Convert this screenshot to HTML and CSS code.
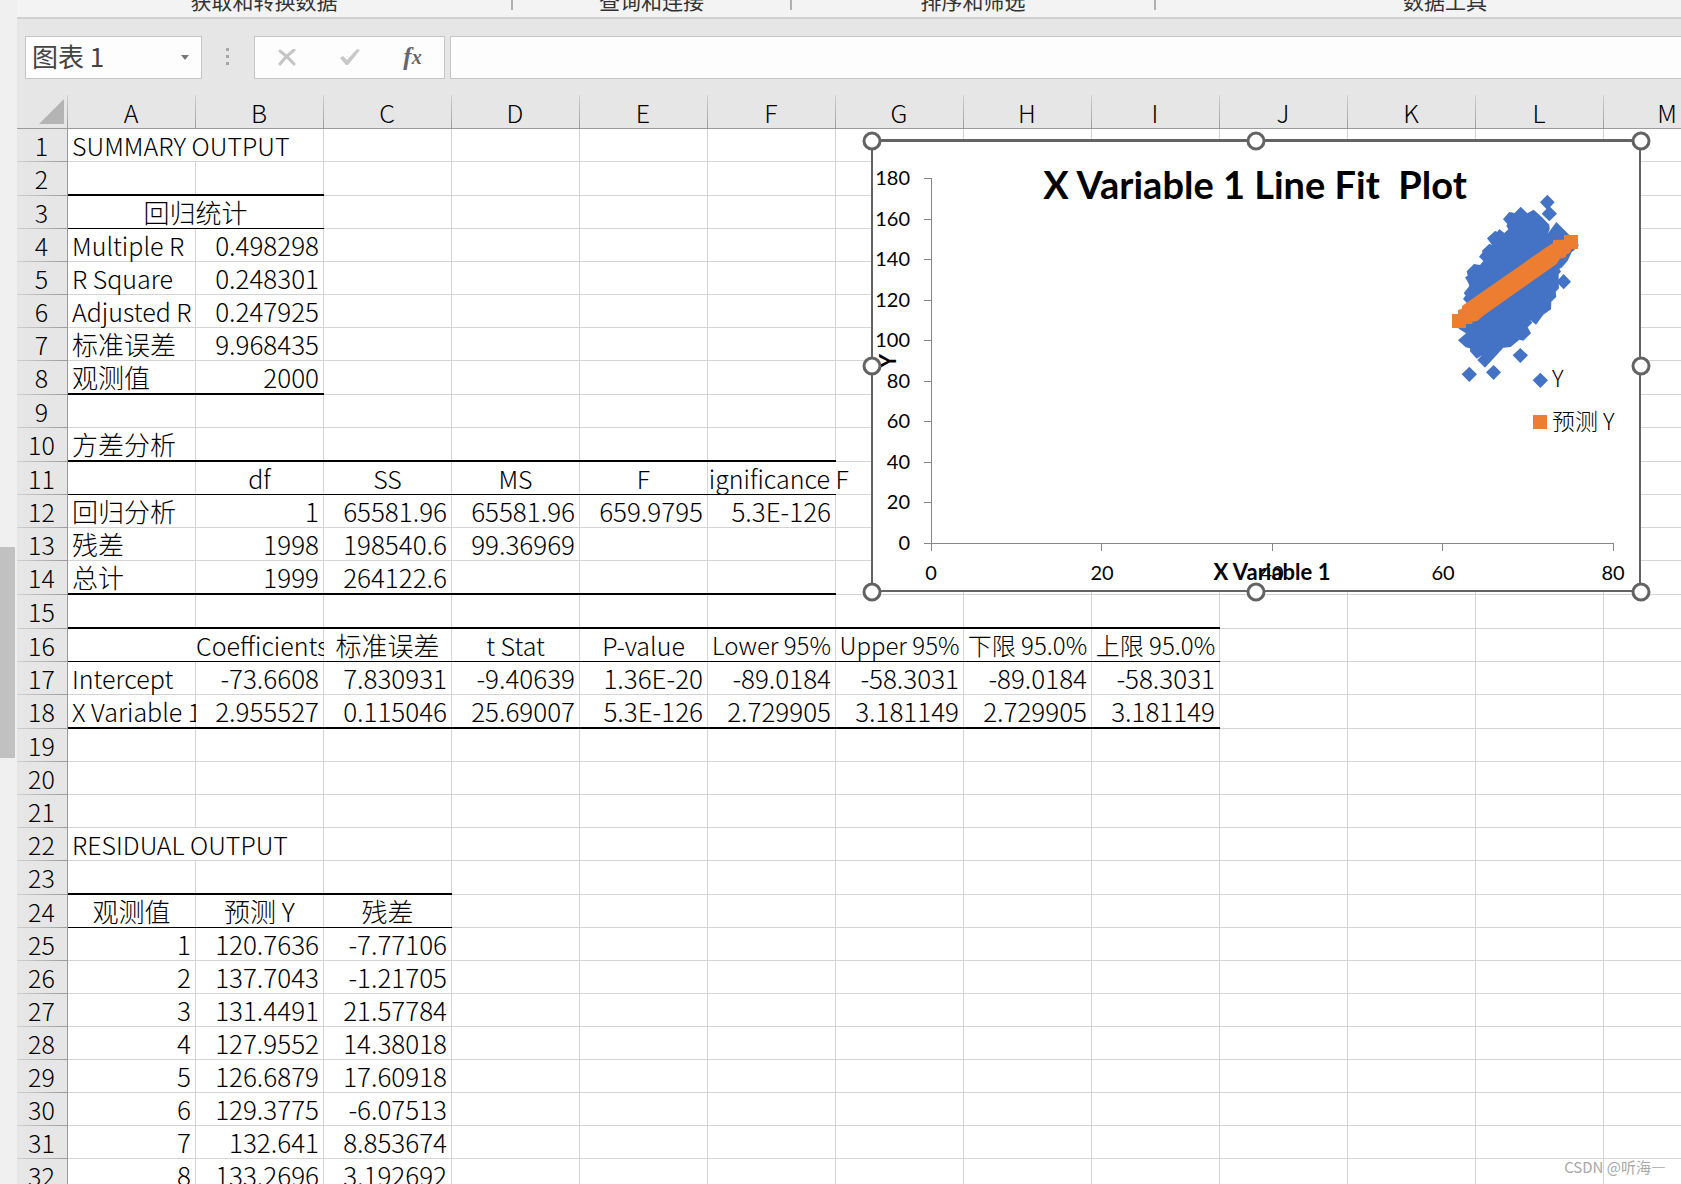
FILE: index.html
```html
<!DOCTYPE html>
<html lang="zh-CN">
<head>
<meta charset="utf-8">
<title>回归分析</title>
<link rel="stylesheet" href="styles.css">
</head>
<body>
<div class="app">
  <aside class="rail"><div class="rail-thumb"></div></aside>
  <main class="book">
    <div class="ribbon">
      <span class="group g-get">获取和转换数据</span>
      <span class="group g-query">查询和连接</span>
      <span class="group g-sort">排序和筛选</span>
      <span class="group g-tools">数据工具</span>
    </div>
    <div class="formula-bar">
      <div class="name-box">
        <input class="name-input" type="text" value="图表 1" aria-label="名称框">
        <button class="name-drop" type="button" aria-label="展开"><svg width="8" height="5"><path d="M0 0h8L4 5z" fill="#777"/></svg></button>
      </div>
      <svg class="grip" width="3" height="18"><path d="M0 0h3v3H0zM0 7h3v3H0zM0 14h3v3H0z" fill="#a6a6a6"/></svg>
      <div class="actions">
        <button type="button" aria-label="取消"><svg width="18" height="17" viewBox="0 0 18 17"><path d="M2 2Q9 7 16 15M16 1Q8 7 2 15" fill="none" stroke="#c4c4c4" stroke-width="3" stroke-linecap="round"/></svg></button>
        <button type="button" aria-label="输入"><svg width="20" height="18" viewBox="0 0 20 18"><path d="M0 10L3 8L7 12L17 1L20 2L8 17H6z" fill="#c8c8c8"/></svg></button>
        <button type="button" class="fx" aria-label="插入函数"><i class="f">f</i><i class="x">x</i></button>
      </div>
      <input class="formula" type="text" aria-label="编辑栏">
    </div>
    <div class="sheet">
      <table class="grid">
        <colgroup><col class="col-head"><col span="13" class="col"><col></colgroup>
        <thead>
          <tr><th class="corner"><svg width="25" height="25"><path d="M25 0V25H0z" fill="#b4b4b4"/></svg></th><th>A</th><th>B</th><th>C</th><th>D</th><th>E</th><th>F</th><th>G</th><th>H</th><th>I</th><th>J</th><th>K</th><th>L</th><th>M</th><th></th></tr>
        </thead>
        <tbody>
          <tr><th>1</th><td colspan="2" class="span">SUMMARY OUTPUT</td><td colspan="12"></td></tr>
          <tr class="tall"><th>2</th><td colspan="2" class="thick"></td><td colspan="12"></td></tr>
          <tr><th>3</th><td colspan="2" class="span c zh thin">回归统计</td><td colspan="12"></td></tr>
          <tr><th>4</th><td>Multiple R</td><td class="n">0.498298</td><td colspan="12"></td></tr>
          <tr><th>5</th><td>R Square</td><td class="n">0.248301</td><td colspan="12"></td></tr>
          <tr><th>6</th><td>Adjusted R Square</td><td class="n">0.247925</td><td colspan="12"></td></tr>
          <tr><th>7</th><td class="zh">标准误差</td><td class="n">9.968435</td><td colspan="12"></td></tr>
          <tr class="tall"><th>8</th><td class="zh thick">观测值</td><td class="n thick">2000</td><td colspan="12"></td></tr>
          <tr><th>9</th><td colspan="14"></td></tr>
          <tr class="tall"><th>10</th><td class="zh thick">方差分析</td><td colspan="5" class="thick"></td><td colspan="8"></td></tr>
          <tr><th>11</th><td class="thin"></td><td class="c thin">df</td><td class="c thin">SS</td><td class="c thin">MS</td><td class="c thin">F</td><td class="thin open spill"><div>Significance F</div></td><td colspan="8"></td></tr>
          <tr><th>12</th><td class="zh">回归分析</td><td class="n">1</td><td class="n">65581.96</td><td class="n">65581.96</td><td class="n">659.9795</td><td class="n">5.3E-126</td><td colspan="8"></td></tr>
          <tr><th>13</th><td class="zh">残差</td><td class="n">1998</td><td class="n">198540.6</td><td class="n">99.36969</td><td colspan="10"></td></tr>
          <tr class="tall"><th>14</th><td class="zh thick">总计</td><td class="n thick">1999</td><td class="n thick">264122.6</td><td colspan="3" class="thick"></td><td colspan="8"></td></tr>
          <tr class="tall"><th>15</th><td colspan="9" class="thick"></td><td colspan="5"></td></tr>
          <tr><th>16</th><td class="thin open"></td><td class="c thin">Coefficients</td><td class="c zh thin">标准误差</td><td class="c thin">t Stat</td><td class="c thin">P-value</td><td class="c tight thin">Lower 95%</td><td class="c tight thin">Upper 95%</td><td class="c tight thin">下限 95.0%</td><td class="c tight thin">上限 95.0%</td><td colspan="5"></td></tr>
          <tr><th>17</th><td>Intercept</td><td class="n">-73.6608</td><td class="n">7.830931</td><td class="n">-9.40639</td><td class="n">1.36E-20</td><td class="n">-89.0184</td><td class="n">-58.3031</td><td class="n">-89.0184</td><td class="n">-58.3031</td><td colspan="5"></td></tr>
          <tr class="tall"><th>18</th><td class="thick">X Variable 1</td><td class="n thick">2.955527</td><td class="n thick">0.115046</td><td class="n thick">25.69007</td><td class="n thick">5.3E-126</td><td class="n thick">2.729905</td><td class="n thick">3.181149</td><td class="n thick">2.729905</td><td class="n thick">3.181149</td><td colspan="5"></td></tr>
          <tr><th>19</th><td colspan="14"></td></tr>
          <tr><th>20</th><td colspan="14"></td></tr>
          <tr><th>21</th><td colspan="14"></td></tr>
          <tr><th>22</th><td colspan="2" class="span">RESIDUAL OUTPUT</td><td colspan="12"></td></tr>
          <tr class="tall"><th>23</th><td colspan="3" class="thick"></td><td colspan="11"></td></tr>
          <tr><th>24</th><td class="c zh thin">观测值</td><td class="c zh thin">预测 Y</td><td class="c zh thin">残差</td><td colspan="11"></td></tr>
          <tr><th>25</th><td class="n">1</td><td class="n">120.7636</td><td class="n">-7.77106</td><td colspan="11"></td></tr>
          <tr><th>26</th><td class="n">2</td><td class="n">137.7043</td><td class="n">-1.21705</td><td colspan="11"></td></tr>
          <tr><th>27</th><td class="n">3</td><td class="n">131.4491</td><td class="n">21.57784</td><td colspan="11"></td></tr>
          <tr><th>28</th><td class="n">4</td><td class="n">127.9552</td><td class="n">14.38018</td><td colspan="11"></td></tr>
          <tr><th>29</th><td class="n">5</td><td class="n">126.6879</td><td class="n">17.60918</td><td colspan="11"></td></tr>
          <tr><th>30</th><td class="n">6</td><td class="n">129.3775</td><td class="n">-6.07513</td><td colspan="11"></td></tr>
          <tr><th>31</th><td class="n">7</td><td class="n">132.641</td><td class="n">8.853674</td><td colspan="11"></td></tr>
          <tr><th>32</th><td class="n">8</td><td class="n">133.2696</td><td class="n">3.192692</td><td colspan="11"></td></tr>
        </tbody>
      </table>
      <svg class="chart" width="790" height="472" viewBox="862 131 790 472" role="img" aria-label="X Variable 1 Line Fit Plot">
        <rect x="871" y="140" width="769" height="451" fill="#fff"/>
        <path d="M931.500 178V551M924 178.500h7M924 219.500h7M924 259.500h7M924 300.500h7M924 340.500h7M924 381.500h7M924 421.500h7M924 462.500h7M924 502.500h7M924 543.500H1614M1101.500 543v8M1272.500 543v8M1442.500 543v8M1613.500 543v8" fill="none" stroke="#868686"/>
        <text class="title" x="1255" y="199">X Variable 1 Line Fit&#160; Plot</text>
        <g class="tick-y">
          <text x="910" y="185">180</text><text x="910" y="226">160</text><text x="910" y="266">140</text><text x="910" y="307">120</text><text x="910" y="347">100</text><text x="910" y="388">80</text><text x="910" y="428">60</text><text x="910" y="469">40</text><text x="910" y="509">20</text><text x="910" y="550">0</text>
        </g>
        <g class="tick-x">
          <text x="931" y="580">0</text><text x="1102" y="580">20</text><text x="1272" y="580">40</text><text x="1443" y="580">60</text><text x="1613" y="580">80</text>
        </g>
        <text class="axis" x="1272" y="580">X Variable 1</text>
        <text class="axis" transform="translate(896 361) rotate(-90)">Y</text>
        <svg x="1420" y="180" width="220" height="270" viewBox="0 0 660 810">
          <path fill="#4472c4" d="M302 80L322 100L341 89L366 112L388 134L389 148L383 161L409 126L445 162L474 190L476 198L455 217L443 242L425 263L418 266L423 275L416 283V310L417 325L407 335L409 350L394 365L393 388L370 404L348 434L330 419L337 428L323 442L333 460L310 482L298 479L272 501L250 503L195 563L172 540L186 526L170 536L150 514V505L137 502L114 481L138 460L116 446L120 400L140 368L129 357L137 346L131 340L148 318L145 309L135 292L143 287L140 274L162 252L180 255L190 243L177 230L187 218L186 212L208 191L216 195L201 175L225 153L232 155L238 147L253 159L265 148L259 138L262 132L249 118L268 96L284 99Z"/>
          <path fill="#4472c4" d="M382 44l22 23l-22 23l-22-23zM388 78l23 23l-23 23l-23-23zM431 282l22 23l-22 23l-22-23zM301 504l23 22l-23 23l-23-23zM221 555l22 22l-22 23l-23-23zM148 560l23 23l-23 23l-23-23zM361 578l23 23l-23 23l-23-23z"/>
          <path fill="#ed7d31" d="M96 402H114V390L126 386V378L140 368L380 201L399 189V181L412 179H432V165H474V207H455L450 219L438 224V232L420 236L410 252L190 407L172 423L157 425V432H138V444H96ZM339 705h42v42h-42z"/>
        </svg>
        <text class="legend" x="1552" y="387">Y</text>
        <text class="legend" x="1552" y="430">预测 Y</text>
        <rect x="872" y="140" width="768" height="451" fill="none" stroke="#636363" stroke-width="2"/>
        <path d="M872 141.500H1640" stroke="#636363"/>
        <g fill="#fff" stroke="#636363" stroke-width="3">
          <circle cx="872" cy="141" r="8"/><circle cx="1256" cy="141" r="8"/><circle cx="1641" cy="141" r="8"/>
          <circle cx="872" cy="366" r="8"/><circle cx="1641" cy="366" r="8"/>
          <circle cx="872" cy="592" r="8"/><circle cx="1256" cy="592" r="8"/><circle cx="1641" cy="592" r="8"/>
        </g>
      </svg>
    </div>
  </main>
  <div class="watermark">CSDN @听海—</div>
</div>
</body>
</html>
```
FILE: styles.css
```css
* { box-sizing: border-box; }

body {
  margin: 0;
  overflow: hidden;
  background: #fff;
  color: #000;
  font: 300 25px/32px "Noto Sans CJK SC", sans-serif;
}

button, input {
  padding: 0;
  border: 0;
  background: none;
  font: inherit;
  color: inherit;
}

.app {
  position: relative;
  display: flex;
  height: 100vh;
  overflow: hidden;
}

.rail {
  flex: none;
  width: 17px;
  padding-top: 547px;
  background: #f0f0f0;
}

.rail-thumb {
  width: 15px;
  height: 211px;
  background: #c1c1c1;
}

.book {
  flex: 1;
  min-width: 0;
  background: #e6e6e6;
}

/* Ribbon group captions */
.ribbon {
  display: flex;
  height: 19px;
  overflow: hidden;
  background: #f3f3f3;
  border-bottom: 2px solid #d0d0d0;
  font-size: 21px;
  font-weight: 400;
  line-height: 21px;
  color: #333;
}

.group {
  flex: none;
  display: flex;
  align-items: flex-end;
  justify-content: center;
  padding: 0 2px 6px 0;
  background: linear-gradient(#b0b0b0, #b0b0b0) right top / 2px 10px no-repeat;
}

.g-get { width: 496px; }
.g-query { width: 279px; }
.g-sort { width: 364px; }
.g-tools { width: 580px; }

/* Name box and formula bar */
.formula-bar {
  display: flex;
  align-items: center;
  height: 76px;
  padding: 0 0 0 8px;
}

.name-box, .actions, .formula {
  height: 43px;
  background: #fdfdfd;
  border: 1px solid #c6c6c6;
}

.name-box {
  display: flex;
  align-items: center;
  width: 177px;
  padding: 0 12px 0 6px;
  color: #444;
  font-size: 26px;
  font-weight: 400;
}

.name-input {
  flex: 1;
  min-width: 0;
  padding-bottom: 2px;
}

.name-drop {
  display: flex;
}

.grip { margin: 0 25px 0 24px; }

.actions {
  display: grid;
  grid-template-columns: repeat(3, 1fr);
  width: 191px;
}

.actions button {
  display: flex;
  align-items: center;
  justify-content: center;
}

.fx {
  color: #666;
  font-family: "Liberation Serif", serif;
  font-weight: 700;
}

.fx .x { font-size: 20px; }

.formula {
  flex: 1;
  min-width: 0;
  margin-left: 5px;
  border-right: 0;
  padding: 0 8px;
}

/* Worksheet */
.sheet {
  position: relative;
  background: #fff;
}

.grid {
  width: 100%;
  min-width: 1715px;
  table-layout: fixed;
  border-spacing: 0;
}

.col-head { width: 51px; }
.col { width: 128px; }

th {
  height: 33px;
  padding: 0 2px 1px 0;
  font-weight: inherit;
  background:
    linear-gradient(#9b9b9b, #9b9b9b) right / 1px 100% no-repeat,
    linear-gradient(90deg, #d0d0d0, #9b9b9b) bottom / 100% 1px no-repeat,
    #e6e6e6;
}

thead th {
  height: 34px;
  background:
    linear-gradient(#9b9b9b, #9b9b9b) bottom / 100% 1px no-repeat,
    linear-gradient(#d0d0d0, #9b9b9b) right / 1px 100% no-repeat,
    #e6e6e6;
}

.corner svg {
  display: block;
  margin: 3px 2px 3px auto;
}

td {
  --line: #d4d4d4;
  --weight: 1px;
  --step: 128px;
  --rule: #d4d4d4;
  padding: 0 4px 1px;
  overflow: hidden;
  white-space: nowrap;
  background:
    linear-gradient(var(--line), var(--line)) bottom / 100% var(--weight) no-repeat,
    linear-gradient(90deg, transparent calc(var(--step) - 1px), var(--rule) calc(var(--step) - 1px)) left / var(--step) 100% repeat-x;
}

.tall th, .tall td {
  height: 34px;
  padding-bottom: 2px;
}

.span { --step: 256px; }
.open { --rule: transparent; }
.thin { --line: #000; }
.thick { --line: #000; --weight: 2px; }
.zh { font-size: 26px; }
.tight { font-size: 24px; }

.n {
  padding-right: 5px;
  font-size: 26px;
  text-align: right;
}

.c {
  padding: 0 1px 1px 0;
  text-align: center;
}

.spill {
  padding: 0 1px 1px 0;
  overflow: visible;
}

.spill div {
  display: flex;
  justify-content: center;
  clip-path: inset(0 -128px 0 0);
}

/* Chart object floating over the cells */
.chart {
  position: absolute;
  left: 845px;
  top: 36px;
  font-family: Lato, "Noto Sans CJK SC", sans-serif;
  font-size: 20px;
  font-weight: 400;
}

.title {
  font-size: 38px;
  font-weight: 700;
  text-anchor: middle;
}

.tick-y { text-anchor: end; }
.tick-x { text-anchor: middle; }

.axis {
  font-size: 22px;
  font-weight: 700;
  text-anchor: middle;
}

.legend {
  font-family: "Noto Sans CJK SC", sans-serif;
  font-size: 23px;
  font-weight: 300;
}

.watermark {
  position: absolute;
  right: 15px;
  bottom: 6px;
  font-size: 15px;
  line-height: 22px;
  font-weight: 400;
  color: #a8a8a8;
}
```
